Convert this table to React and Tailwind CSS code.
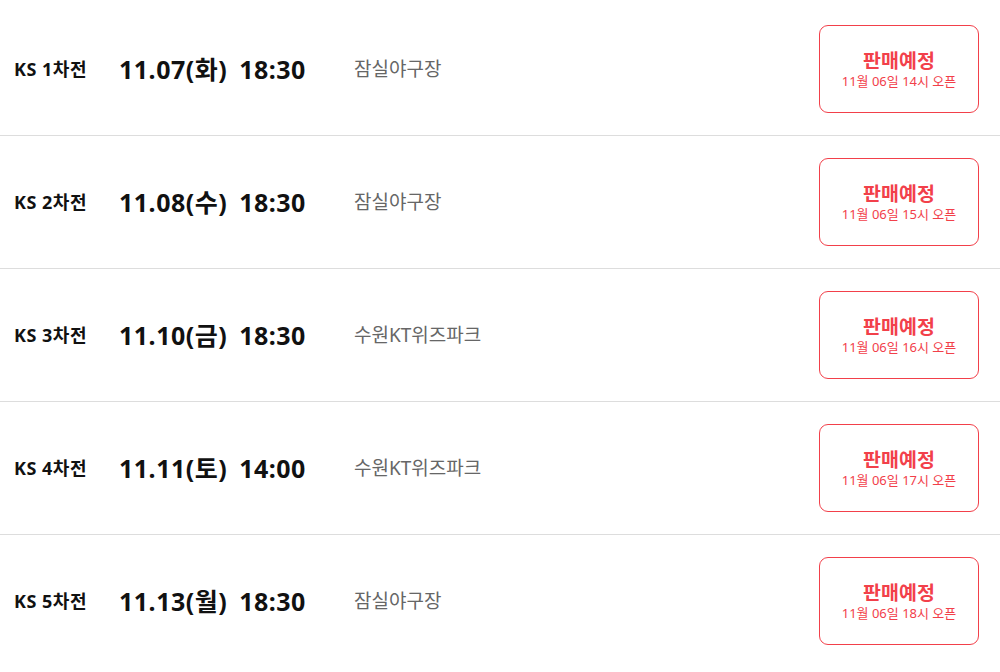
const games = [
  { round: 'KS 1차전', date: '11.07(화)', time: '18:30', place: '잠실야구장', open: '11월 06일 14시 오픈' },
  { round: 'KS 2차전', date: '11.08(수)', time: '18:30', place: '잠실야구장', open: '11월 06일 15시 오픈' },
  { round: 'KS 3차전', date: '11.10(금)', time: '18:30', place: '수원KT위즈파크', open: '11월 06일 16시 오픈' },
  { round: 'KS 4차전', date: '11.11(토)', time: '14:00', place: '수원KT위즈파크', open: '11월 06일 17시 오픈' },
  { round: 'KS 5차전', date: '11.13(월)', time: '18:30', place: '잠실야구장', open: '11월 06일 18시 오픈' },
]

function GameRow({ game, last }) {
  return (
    <li className={`flex items-center py-[22px] ${last ? '' : 'border-b border-[#dddddd]'}`}>
      <div className="w-[119px] pl-[14px] pt-[1px] text-[18px] font-bold tracking-[0.5px] text-[#111]">{game.round}</div>
      <div className="w-[235px] pt-[1px] text-[25px] font-bold tracking-[0.5px] text-[#111]">
        {game.date}<span className="ml-[12px]">{game.time}</span>
      </div>
      <div className="flex-1 pt-[1px] text-[19px] text-[#666]">{game.place}</div>
      <button className="mr-[21px] flex h-[88px] w-[160px] flex-col items-center justify-center rounded-[9px] border border-[#f2404a] bg-white text-[#f2404a]">
        <span className="text-[19.5px] font-bold leading-[24px]">판매예정</span>
        <span className="text-[13px] leading-[16px]">{game.open}</span>
      </button>
    </li>
  )
}

export default function App() {
  return (
    <div className="min-h-screen bg-white pt-[3px]" style={{ fontFamily: '"Noto Sans", "Noto Sans CJK KR", sans-serif' }}>
      <ul>
        {games.map((g, i) => (
          <GameRow key={g.round} game={g} last={i === games.length - 1} />
        ))}
      </ul>
    </div>
  )
}
